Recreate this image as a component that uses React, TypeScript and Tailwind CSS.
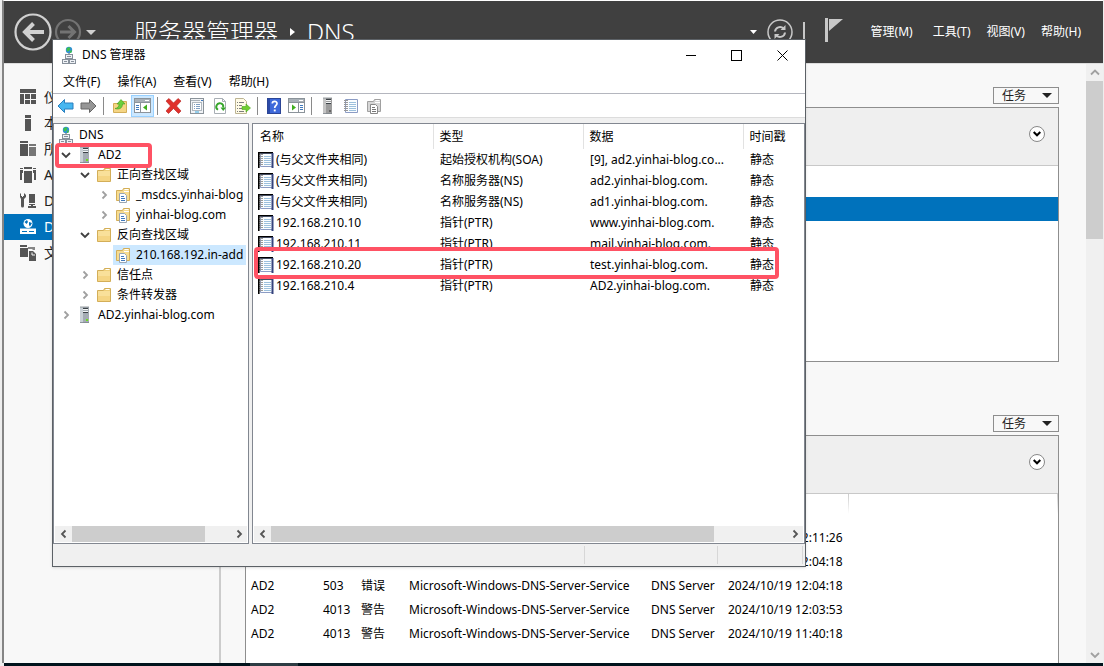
import type { ReactNode } from 'react';
import clsx from 'clsx';

type IconProps = { className?: string };

/* ---------- Icons ---------- */

function DnsIcon() {
  return (
    <svg width="16" height="18" viewBox="0 0 16 18" className="shrink-0">
      <circle cx="8" cy="4" r="3.2" fill="#2f8fd4" />
      <path d="M5.5 2.5 8 1l1.500 1.500L8 5 6 5.500zM9 5l2-1-.5 2.500L9 7z" fill="#3fc24a" />
      <path d="M7.500 7h1v2h-1z" fill="#666" />
      <rect x="4.500" y="8.500" width="7" height="4" fill="#eef1f5" stroke="#87909b" />
      <rect x="1.500" y="13.500" width="6" height="4" fill="#eef1f5" stroke="#87909b" />
      <rect x="8.500" y="13.500" width="6" height="4" fill="#eef1f5" stroke="#87909b" />
      <path d="M6 10.500h4M3 15.500h3M10 15.500h3" stroke="#87909b" />
    </svg>
  );
}

function ServerIcon({ dim = false }: { dim?: boolean }) {
  return (
    <svg width="12" height="18" viewBox="0 0 12 18" className="shrink-0">
      <path d="M1 1h9v16H1z" fill={dim ? '#9c9c9c' : '#a3abb3'} />
      <path d="M1 1h3v16H1z" fill={dim ? '#c4c4c4' : '#c9d0d6'} />
      <path d="M4 2.500h5M4 6.500h5" stroke="#3c4247" />
      <path d="M4 3.500h5M4 5.500h5" stroke="#f2f4f5" />
      <path d="M1 1h9M1 16.500h9" fill="none" stroke="#7d858c" strokeWidth=".8" />
      <path d="M7 13h2v2H7z" fill={dim ? '#666' : '#6fe01b'} />
    </svg>
  );
}

function FolderIcon() {
  return (
    <svg width="16" height="16" viewBox="0 0 16 16" className="shrink-0">
      <path d="M1.500 3.500h6l1-2h6v13h-13z" fill="#efcf78" stroke="#d3ae58" />
      <path d="M9.500 2.500h4" stroke="#fff" />
      <path d="M2 4h12v10H2z" fill="#f9e09a" />
      <path d="M2 9h12v5H2z" fill="#f5d584" />
    </svg>
  );
}

function ZoneIcon({ dim = false }: { dim?: boolean }) {
  const edge = dim ? '#a0a0a0' : '#d3ae58';
  return (
    <svg width="16" height="16" viewBox="0 0 16 16" className="shrink-0">
      <path d="M1.500 3.500h6l1-2h6v12h-13z" fill={dim ? '#d6d6d6' : '#f7dc90'} stroke={edge} />
      <path d="M9.500 2.500h4M9 4.500h5" stroke="#fff" />
      <path d="M4.500 6.500h5l2 2v7h-7z" fill="#fff" stroke={dim ? '#888' : '#9aa6b3'} />
      <path d="M6 9.500h3M6 11.500h4M6 13.500h4" stroke={dim ? '#777' : '#3f79bd'} />
    </svg>
  );
}

/* framed: thick outline used for rows of the record list */
function NotebookIcon({ framed = false }: { framed?: boolean }) {
  return (
    <svg width="16" height="16" viewBox="0 0 16 16" className="shrink-0">
      <path d="M2 1h13v14H2z" fill="#fafdff" />
      <path d="M2.500 1.500h12v13h-12z" fill="none" stroke="#8c9cc4" />
      <path d="M1 2.500h4M1 4.500h4M1 6.500h4M1 8.500h4M1 10.500h4M1 12.500h4" stroke="#999" />
      <path d="M6 4.500h7M6 6.500h7M6 8.500h7M6 10.500h7M6 12.500h7" stroke="#9cc0dd" />
      {framed && <path d="M.8 16V.8H15" fill="none" stroke="#000" strokeWidth="1.600" />}
      {framed && <path d="M14.500 1v15" stroke="#35437c" strokeWidth="2" />}
    </svg>
  );
}

function ArrowIcon({ forward = false }: { forward?: boolean }) {
  return (
    <svg width="17" height="16" viewBox="0 0 17 16" strokeLinejoin="round">
      {forward ? (
        <path d="M16 8 9.500 1.500V5H1v6h8.500v3.500z" fill="#969696" stroke="#666" />
      ) : (
        <path d="M1 8l6.500-6.500V5H16v6H7.500v3.500z" fill="#45b6f0" stroke="#2a7fbe" />
      )}
    </svg>
  );
}

function UpFolderIcon() {
  return (
    <svg width="16" height="16" viewBox="0 0 16 16">
      <path d="M1.500 5.500h6l1-2h6v11h-13z" fill="#f5d584" stroke="#d3ae58" />
      <path d="M3 10.500c3-.5 4-2 4-4.500H5l4-4.500L13 6h-2.500c0 4-3 6-7.500 4.500z" fill="#6cd03c" stroke="#3f9a20" strokeWidth=".6" />
    </svg>
  );
}

function PaneIcon({ right = false }: { right?: boolean }) {
  return (
    <svg width="17" height="15" viewBox="0 0 17 15">
      <rect x=".5" y=".5" width="16" height="14" fill="#fff" stroke="#8b939a" />
      <path d="M1 1h15v3H1z" fill="#a9b1b8" />
      <path d="M11 2.500h4" stroke="#fff" />
      <path d="M1 4.500h15" stroke="#8b939a" />
      {right ? (
        <>
          <path d="M10.500 5v9" stroke="#8b939a" />
          <path d="M12 7.500h3M12 9.500h3M12 11.500h3" stroke="#3f79bd" />
          <path d="M4 6.500v6l4-3z" fill="#3fae1e" />
        </>
      ) : (
        <>
          <path d="M6.500 5v9" stroke="#8b939a" />
          <path d="M2 7.500h3M2 9.500h3M2 11.500h3" stroke="#3f79bd" />
          <path d="M13 6.500v6l-4-3z" fill="#3fae1e" />
        </>
      )}
    </svg>
  );
}

function DeleteIcon() {
  return (
    <svg width="17" height="16" viewBox="0 0 17 16">
      <path d="M1 3l3-2.500 4.500 4.500L13 .5 16 3l-4.500 5 4.500 5-2.500 2.500-5-5-5 5L1 13l4.500-5z" fill="#e0302b" stroke="#b3201c" strokeWidth=".6" />
    </svg>
  );
}

function PropertiesIcon() {
  return (
    <svg width="16" height="16" viewBox="0 0 16 16">
      <rect x="1.500" y=".5" width="13" height="15" fill="#f1f3f6" stroke="#8b939a" />
      <path d="M2 2.500h9" stroke="#aab2b9" />
      <path d="M12 2.500h2" stroke="#3f79bd" />
      <rect x="3.500" y="4.500" width="9" height="8" fill="#fff" stroke="#b0b8bf" />
      <path d="M5 6.500h1M7 6.500h4M5 8.500h1M7 8.500h4M5 10.500h1M7 10.500h4" stroke="#7f9fc2" />
      <path d="M6 14h4" stroke="#38a8dd" />
    </svg>
  );
}

function RefreshPageIcon() {
  return (
    <svg width="14" height="16" viewBox="0 0 14 16">
      <path d="M1.500.5h8l3 3v12h-11z" fill="#fff" stroke="#a8aeb4" />
      <path d="M9.500.5v3h3" fill="none" stroke="#a8aeb4" />
      <path d="M5 11.800A3.500 3.500 0 1 1 10.200 9.500" fill="none" stroke="#36a52a" strokeWidth="1.900" />
      <path d="M7.500 9.500H13L10.200 13z" fill="#36a52a" />
    </svg>
  );
}

function ExportIcon() {
  return (
    <svg width="17" height="16" viewBox="0 0 17 16">
      <path d="M1.500.5h8l3 3v12h-11z" fill="#fffbe6" stroke="#bdb493" />
      <path d="M3 4.500h1M5 4.500h5M3 7.500h1M5 7.500h3M3 10.500h1M5 10.500h3M3 13.500h1M5 13.500h5" stroke="#7d7d7d" />
      <path d="M8 8.500h4V6l4.500 4-4.500 4v-2.500H8z" fill="#6fce2f" stroke="#4aa81e" strokeWidth=".6" />
    </svg>
  );
}

function HelpIcon() {
  return (
    <svg width="14" height="16" viewBox="0 0 14 16">
      <rect x=".5" y=".5" width="13" height="15" fill="#3e69da" stroke="#2b4596" />
      <path d="M1 1h2v14H1z" fill="#2b4aa8" />
      <path d="M5.300 5.500C5.300 2.800 10 2.700 10 5.500 10 7.500 7.700 7.500 7.700 10" fill="none" stroke="#fff" strokeWidth="1.700" />
      <path d="M6.800 11.500h1.900v1.900H6.800z" fill="#fff" />
    </svg>
  );
}

const navIcons: Record<string, ReactNode> = {
  dashboard: <path d="M0 0h16v4H0zM0 5h4v10H0zM5 5h5v5H5zM11 5h5v5h-5zM5 11h5v4H5zM11 11h5v4h-5z" />,
  local: <path d="M5 0h6v3H5zM5 4h6v12H5z" />,
  all: (
    <>
      <path d="M0 0h8v2H0zM0 3h8v12H0z" />
      <path d="M9 3h7v2H9zM9 6h7v9H9z" opacity=".8" />
    </>
  ),
  adds: <path d="M0 1h3v1H0zM13 1h3v1h-3zM0 3h2v10H0zM14 3h2v10h-2zM4 0h8v2H4zM4 4h8v12H4zM2 3h1v3H2zM13 3h1v3h-1z" />,
  dhcp: (
    <>
      <path d="M1 0v3h1v1h1V3h1V0l2 2v2L4 6v7a1.500 1.500 0 0 1-3 0V6L0 4V1z" />
      <path d="M9 1h6v9H9zM9 11h6v1H9zM11 12h2v1h3v2H8v-2h3z" />
    </>
  ),
  dns: (
    <>
      <circle cx="8" cy="4.500" r="4.500" />
      <path d="M4.500 3 7 1l1 2-1.500 2zM9 3l3 1-2 3.500L9 6z" fill="#0072bc" />
      <path d="M0 9.500h16V15H0z" />
      <path d="M2 12.500h5M9 12.500h5" stroke="#0072bc" />
    </>
  ),
  file: (
    <>
      <path d="M0 0h7v2H0zM0 3h8v9H0z" />
      <path d="M8 2h7v3h-2l-1-1H8z" opacity=".7" />
      <path d="M9 6h4l3 3v7H9z" />
      <path d="M12 7.500v2.500h3" fill="none" stroke="#f8f8f8" />
    </>
  ),
};

const NavIcon = ({ name }: { name: string }) => (
  <svg width="16" height="16" viewBox="0 0 16 16" fill="currentColor" className="shrink-0">
    {navIcons[name]}
  </svg>
);

function Chevron({ dir, className }: IconProps & { dir: 'left' | 'right' | 'up' | 'down' }) {
  const d = {
    left: 'M6.500 1.500 3 5l3.500 3.500',
    right: 'M3.500 1.500 7 5 3.500 8.500',
    up: 'M1 6.500 5 2.500l4 4',
    down: 'M1 3l4 4 4-4',
  }[dir];
  return (
    <svg width="10" height="10" viewBox="0 0 10 10" fill="none" stroke="currentColor" strokeWidth="1.800" className={className}>
      <path d={d} />
    </svg>
  );
}

function Caret({ className }: IconProps) {
  return (
    <svg width="10" height="5" viewBox="0 0 10 5" fill="currentColor" className={className}>
      <path d="M0 0h10L5 5z" />
    </svg>
  );
}

/* ---------- Data ---------- */

const navItems = [
  { icon: 'dashboard', label: '仪表板' },
  { icon: 'local', label: '本地服务器' },
  { icon: 'all', label: '所有服务器' },
  { icon: 'adds', label: 'AD DS' },
  { icon: 'dhcp', label: 'DHCP' },
  { icon: 'dns', label: 'DNS', active: true },
  { icon: 'file', label: '文件和存储服务' },
];

const events = [
  { server: 'AD2', id: '4013', level: '警告', time: '2024/10/19 12:11:26' },
  { server: 'AD2', id: '4013', level: '警告', time: '2024/10/19 12:04:18' },
  { server: 'AD2', id: '503', level: '错误', time: '2024/10/19 12:04:18' },
  { server: 'AD2', id: '4013', level: '警告', time: '2024/10/19 12:03:53' },
  { server: 'AD2', id: '4013', level: '警告', time: '2024/10/19 11:40:18' },
];

type Node = { label: string; pad: string; icon: ReactNode; open?: boolean; leaf?: boolean; selected?: boolean };

const tree: Node[] = [
  { label: 'DNS', pad: 'pl-0.5', icon: <DnsIcon />, leaf: true },
  { label: 'AD2', pad: 'pl-0.5', icon: <ServerIcon />, open: true },
  { label: '正向查找区域', pad: 'pl-[21px]', icon: <FolderIcon />, open: true },
  { label: '_msdcs.yinhai-blog', pad: 'pl-10', icon: <ZoneIcon /> },
  { label: 'yinhai-blog.com', pad: 'pl-10', icon: <ZoneIcon /> },
  { label: '反向查找区域', pad: 'pl-[21px]', icon: <FolderIcon />, open: true },
  { label: '210.168.192.in-add', pad: 'pl-[59px]', icon: <ZoneIcon />, leaf: true, selected: true },
  { label: '信任点', pad: 'pl-[21px]', icon: <FolderIcon /> },
  { label: '条件转发器', pad: 'pl-[21px]', icon: <FolderIcon /> },
  { label: 'AD2.yinhai-blog.com', pad: 'pl-0.5', icon: <ServerIcon /> },
];

const records = [
  { name: '(与父文件夹相同)', type: '起始授权机构(SOA)', data: '[9], ad2.yinhai-blog.co...' },
  { name: '(与父文件夹相同)', type: '名称服务器(NS)', data: 'ad2.yinhai-blog.com.' },
  { name: '(与父文件夹相同)', type: '名称服务器(NS)', data: 'ad1.yinhai-blog.com.' },
  { name: '192.168.210.10', type: '指针(PTR)', data: 'www.yinhai-blog.com.' },
  { name: '192.168.210.11', type: '指针(PTR)', data: 'mail.yinhai-blog.com.' },
  { name: '192.168.210.20', type: '指针(PTR)', data: 'test.yinhai-blog.com.' },
  { name: '192.168.210.4', type: '指针(PTR)', data: 'AD2.yinhai-blog.com.' },
];

/* ---------- Server manager ---------- */

function ManagerHeader() {
  return (
    <header className="flex h-[62px] shrink-0 items-center bg-[#404040] pl-2.5 pr-[22px] text-white">
      <button aria-label="后退">
        <svg width="38" height="38" viewBox="0 0 38 38" fill="none" stroke="#d0d0d0">
          <circle cx="19" cy="19" r="17.500" strokeWidth="2.200" />
          <path d="M30 19H12M19.500 10.500 11 19l8.500 8.500" strokeWidth="4" />
        </svg>
      </button>
      <button aria-label="前进" className="ml-0.5">
        <svg width="28" height="28" viewBox="0 0 28 28" fill="none" stroke="#737373">
          <circle cx="14" cy="14" r="12" strokeWidth="2.200" />
          <path d="M6 14h14M14.500 8l6 6-6 6" strokeWidth="3" />
        </svg>
      </button>
      <Caret className="ml-1 text-[#d0d0d0]" />
      <h1 className="ml-[38px] flex items-center text-2xl font-light leading-8">
        服务器管理器
        <svg width="5" height="8" viewBox="0 0 5 8" fill="currentColor" className="mx-3">
          <path d="M0 0v8l5-4z" />
        </svg>
        <span>DNS</span>
      </h1>
      <div className="ml-auto flex items-center">
        <svg width="7" height="4" viewBox="0 0 7 4" fill="currentColor">
          <path d="M0 0h7L3.500 4z" />
        </svg>
        <button aria-label="刷新" className="ml-2.5">
          <svg width="26" height="26" viewBox="0 0 26 26" fill="none" stroke="#c8c8c8" strokeWidth="2">
            <circle cx="13" cy="13" r="12" strokeWidth="1.500" />
            <path d="M8 12.500a5 5 0 0 1 8.500-3M18 13.500a5 5 0 0 1-8.500 3" />
            <path d="M18.500 6v5h-5zM7.500 20v-5h5z" fill="#c8c8c8" stroke="none" />
          </svg>
        </button>
        <div className="ml-2.5 h-5 w-0.5 bg-[#c8c8c8]" />
        <button aria-label="通知" className="mb-1 ml-5">
          <svg width="18" height="26" viewBox="0 0 18 26" fill="#c8c8c8">
            <path d="M0 1h3v24H0zM4 2h14L4 14z" />
          </svg>
        </button>
        <nav className="ml-7 flex text-xs">
          <button>管理(M)</button>
          <button className="ml-5">工具(T)</button>
          <button className="ml-4">视图(V)</button>
          <button className="ml-4">帮助(H)</button>
        </nav>
      </div>
    </header>
  );
}

function Sidebar() {
  return (
    <nav className="w-[217px] shrink-0 border-r-2 border-[#ccc] pt-5">
      {navItems.map((item) => (
        <a
          key={item.icon}
          href="#"
          className={clsx('flex h-[26px] items-center gap-2 pl-4 text-sm', item.active ? 'bg-[#0072bc] text-white' : 'text-[#555]')}
        >
          <NavIcon name={item.icon} />
          <span className={item.active ? 'text-white' : 'text-[#222]'}>{item.label}</span>
        </a>
      ))}
    </nav>
  );
}

function TaskButton() {
  return (
    <button className="mb-[3px] flex h-[17px] w-[66px] shrink-0 items-center justify-between self-end border border-[#8e8e8e] bg-[#f8f8f8] pl-2 pr-1.5 text-xs leading-3 text-[#222]">
      任务
      <Caret />
    </button>
  );
}

function PanelHeader() {
  return (
    <div className="flex h-[58px] shrink-0 items-center justify-end border-b border-[#c8c8c8] bg-[#efefef] pr-[13px]">
      <button aria-label="展开" className="mb-1.5 flex size-4 items-center justify-center rounded-full border border-[#888] bg-white">
        <svg width="8" height="6" viewBox="0 0 8 6" fill="none" stroke="#000" strokeWidth="2">
          <path d="M.7 1 4 4.300 7.300 1" />
        </svg>
      </button>
    </div>
  );
}

function ManagerBody() {
  return (
    <main className="flex min-w-0 flex-1 flex-col pl-6 pr-[27px] pt-[23px]">
      <TaskButton />
      <section className="mb-[53px] h-[255px] shrink-0 border border-[#8e8e8e] bg-white">
        <PanelHeader />
        <div className="mt-[31px] h-6 bg-[#0072bc]" />
      </section>

      <TaskButton />
      <section className="flex min-h-0 flex-1 flex-col border border-b-0 border-[#8e8e8e] bg-white">
        <PanelHeader />
        <div className="flex h-8 shrink-0 justify-between">
          <div className="h-5 w-[603px] bg-linear-to-b from-[#ccc] to-white pr-px"><div className="h-full bg-white" /></div>
          <div className="h-5 w-px bg-linear-to-b from-[#ccc] to-white" />
        </div>
        <table className="w-[603px] table-fixed text-xs text-black">
          <tbody>
            {events.map((e, i) => (
              <tr key={i} className="h-6 whitespace-nowrap">
                <td className="w-[77px] p-0 pl-[5px]">{e.server}</td>
                <td className="w-[38px] p-0">{e.id}</td>
                <td className="w-12 p-0">{e.level}</td>
                <td className="w-[242px] p-0">Microsoft-Windows-DNS-Server-Service</td>
                <td className="w-[75px] p-0">DNS Server</td>
                <td className="p-0 pl-0.5">{e.time}</td>
              </tr>
            ))}
          </tbody>
        </table>
      </section>
    </main>
  );
}

/* ---------- DNS console ---------- */

const menus = ['文件(F)', '操作(A)', '查看(V)', '帮助(H)'];

function ToolButton({ label, active, children }: { label: string; active?: boolean; children: ReactNode }) {
  return (
    <button
      aria-label={label}
      className={clsx('flex h-[22px] w-[23px] items-center justify-center', active && 'border border-[#99d1ff] bg-[#cce8ff]')}
    >
      {children}
    </button>
  );
}

const Separator = () => <div className="ml-[3px] mr-1 h-[18px] w-px bg-[#8a8a8a]" />;

function Toolbar() {
  return (
    <div className="flex h-6 shrink-0 items-center border-b border-[#dcdcdc] bg-white pl-px">
      <ToolButton label="后退"><ArrowIcon /></ToolButton>
      <ToolButton label="前进"><ArrowIcon forward /></ToolButton>
      <Separator />
      <ToolButton label="上一级"><UpFolderIcon /></ToolButton>
      <ToolButton label="显示控制台树" active><PaneIcon /></ToolButton>
      <Separator />
      <ToolButton label="删除"><DeleteIcon /></ToolButton>
      <ToolButton label="属性"><PropertiesIcon /></ToolButton>
      <ToolButton label="刷新"><RefreshPageIcon /></ToolButton>
      <ToolButton label="导出列表"><ExportIcon /></ToolButton>
      <Separator />
      <ToolButton label="帮助"><HelpIcon /></ToolButton>
      <ToolButton label="显示操作窗格"><PaneIcon right /></ToolButton>
      <Separator />
      <ToolButton label="服务器"><ServerIcon dim /></ToolButton>
      <ToolButton label="记录"><NotebookIcon /></ToolButton>
      <ToolButton label="区域"><ZoneIcon dim /></ToolButton>
    </div>
  );
}

function HScroll({ thumb }: { thumb: string }) {
  return (
    <div className="m-px mt-auto flex h-4 shrink-0 items-center bg-[#f0f0f0] text-[#555]">
      <button aria-label="向左滚动" className="flex w-[17px] justify-center"><Chevron dir="left" /></button>
      <div className="h-full flex-1">
        <div className={clsx('h-full bg-[#cdcdcd]', thumb)} />
      </div>
      <button aria-label="向右滚动" className="flex w-[17px] justify-center"><Chevron dir="right" /></button>
    </div>
  );
}

function Tree() {
  return (
    <div className="relative flex w-[196px] shrink-0 flex-col border border-[#828790] bg-white">
      <ul className="overflow-hidden pr-0.5 pt-px">
        {tree.map((n) => (
          <li key={n.label} className={clsx('flex h-5 items-center', n.pad)}>
            {!n.leaf && (
              <button aria-label={n.open ? '折叠' : '展开'} className="flex w-[19px] shrink-0 justify-center">
                <Chevron dir={n.open ? 'down' : 'right'} className={n.open ? 'text-[#404040]' : 'text-[#a0a0a0]'} />
              </button>
            )}
            <div className={clsx('flex h-5 min-w-0 flex-1 items-center', n.selected && 'bg-[#cce8ff]')}>
              <span className="flex w-[19px] shrink-0 justify-center">{n.icon}</span>
              <span className="ml-1 whitespace-nowrap">{n.label}</span>
            </div>
          </li>
        ))}
      </ul>
      <HScroll thumb="w-[84%]" />
      <div className="pointer-events-none absolute left-px top-[19px] h-[25px] w-[97px] rounded border-4 border-[#ff5264]" />
    </div>
  );
}

function RecordList() {
  return (
    <div className="relative flex min-w-0 flex-1 flex-col overflow-hidden border border-[#828790] bg-white">
      <table className="w-full table-fixed text-left">
        <thead>
          <tr className="h-[25px]">
            <th className="w-[180px] border-r border-[#e2e2e2] p-0 pl-[7px] font-normal">名称</th>
            <th className="w-[150px] border-r border-[#e2e2e2] p-0 pl-1.5 font-normal">类型</th>
            <th className="w-40 border-r border-[#e2e2e2] p-0 pl-1.5 font-normal">数据</th>
            <th className="p-0 pl-1.5 font-normal">时间戳</th>
          </tr>
        </thead>
        <tbody>
          {records.map((r, i) => (
            <tr key={i} className="h-[21px] whitespace-nowrap">
              <td className="p-0 pl-[5px]">
                <div className="flex items-center gap-0.5">
                  <NotebookIcon framed />
                  {r.name}
                </div>
              </td>
              <td className="p-0 pl-[7px]">{r.type}</td>
              <td className="p-0 pl-[7px]">{r.data}</td>
              <td className="p-0 pl-[7px]">静态</td>
            </tr>
          ))}
        </tbody>
      </table>
      <HScroll thumb="w-[86%]" />
      <div className="pointer-events-none absolute left-px right-[25px] top-[123px] h-8 rounded border-4 border-[#ff5264]" />
    </div>
  );
}

function DnsConsole() {
  return (
    <div className="absolute bottom-[99px] left-[52px] right-[298px] top-[39px] flex flex-col border border-[#5c6166] bg-[#f0f0f0] text-xs text-black shadow-sm">
      <div className="flex h-[30px] shrink-0 items-center bg-white pl-2">
        <DnsIcon />
        <span className="ml-[5px]">DNS 管理器</span>
        <div className="ml-auto flex h-full">
          <button aria-label="最小化" className="flex w-[45px] items-center justify-center"><span className="h-px w-2.5 bg-black" /></button>
          <button aria-label="最大化" className="flex w-[46px] items-center justify-center"><span className="size-[11px] border border-black" /></button>
          <button aria-label="关闭" className="flex w-[46px] items-center justify-center">
            <svg width="11" height="11" viewBox="0 0 11 11" stroke="#000"><path d="M.5.5l10 10M10.500.5l-10 10" /></svg>
          </button>
        </div>
      </div>
      <div className="flex h-6 shrink-0 items-center gap-[17px] border-b border-[#b4b6be] bg-white pl-2.5">
        {menus.map((m) => <button key={m}>{m}</button>)}
      </div>
      <Toolbar />
      <div className="mt-[5px] flex min-h-0 flex-1 gap-[3px]">
        <Tree />
        <RecordList />
      </div>
      <div className="flex h-[22px] shrink-0 justify-end py-0.5 pr-0.5">
        <div className="w-[133px] border-l border-[#d7d7d7]" />
        <div className="w-[86px] border-x border-[#d7d7d7]" />
      </div>
    </div>
  );
}

export default function App() {
  return (
    <div className="relative flex h-screen flex-col overflow-hidden bg-[#eee] pl-0.5 pr-px font-['Noto_Sans','Noto_Sans_CJK_SC',sans-serif]">
      <div className="flex min-h-0 flex-1 flex-col border-l-2 border-t border-l-[#858585] border-t-white bg-[#f8f8f8]">
        <ManagerHeader />
        <div className="flex min-h-0 flex-1 border-t border-[#ddd]">
          <Sidebar />
          <ManagerBody />
          <div className="flex w-[17px] shrink-0 flex-col items-center bg-[#f0f0f0] text-[#a0a0a0]">
            <button aria-label="向上滚动" className="flex h-[17px] items-center"><Chevron dir="up" /></button>
            <div className="w-full flex-1">
              <div className="h-[28%] bg-[#cdcdcd]" />
            </div>
            <button aria-label="向下滚动" className="flex h-[17px] items-center"><Chevron dir="down" /></button>
          </div>
        </div>
      </div>
      <div className="ml-0.5 flex h-[3px] shrink-0 bg-[#00131c] pl-[246px]">
        <div className="w-12 bg-[#2d3c43]" />
      </div>
      <DnsConsole />
    </div>
  );
}
